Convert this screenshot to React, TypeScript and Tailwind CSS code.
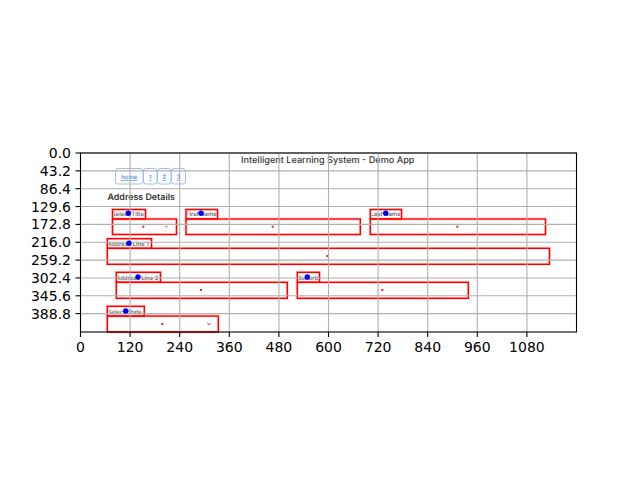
import React from 'react'

const xTicks = ['0', '120', '240', '360', '480', '600', '720', '840', '960', '1080']
const yTicks = ['0.0', '43.2', '86.4', '129.6', '172.8', '216.0', '259.2', '302.4', '345.6', '388.8']

// x1, y1, x2, y2 in screen pixels
const boxes = [
    [112.5, 209.5, 145.5, 219],
    [112.5, 219, 176.5, 234.5],
    [186, 209.5, 217.5, 219],
    [186, 219, 360.3, 234.5],
    [370.3, 209.5, 401.5, 219],
    [370.3, 219, 545.5, 234.5],
    [107.3, 238.7, 151.5, 248.3],
    [107.3, 248.3, 549.5, 264.3],
    [116.3, 272.3, 160.5, 282.3],
    [116.3, 282.3, 287.3, 298.3],
    [297.3, 272.3, 319.5, 282.3],
    [297.3, 282.3, 468.3, 298.3],
    [107.3, 306.3, 144.3, 316],
    [107.3, 316, 218.3, 332],
]

const labels = [
    { text: 'Select Title', x: 112, y: 216 },
    { text: 'First Name', x: 186, y: 216 },
    { text: 'Last Name', x: 370.5, y: 216 },
    { text: 'Address Line 1', x: 107.5, y: 245.5 },
    { text: 'Address Line 2', x: 116, y: 279.5 },
    { text: 'Suburb', x: 297.5, y: 279.5 },
    { text: 'Select State', x: 107.5, y: 313.5 },
]

const blueDots = [[128.3, 213.3], [201, 213.3], [385.7, 213.3], [129, 243.3], [138, 277], [307.3, 277], [125.7, 311]]
const redDots = [[143.3, 226.7], [272.7, 226.7], [457.3, 226.7], [327.3, 256], [201, 290], [382.3, 290], [162.3, 324]]

const navButtons = [
    { text: 'home', x: 115.5, w: 27.5 },
    { text: '1', x: 143.5, w: 13.5 },
    { text: '2', x: 157.5, w: 13.5 },
    { text: '3', x: 171.5, w: 14 },
]

function App() {
    return (
        <div className="h-[480px] w-[640px] bg-white">
            <svg width="640" height="480" viewBox="0 0 640 480">
                <g className="font-['Inter',sans-serif] [text-rendering:geometricPrecision]">
                    <text x="241" y="162.5" fontSize="9.15" fontWeight="500" fill="#3a3a3a">Intelligent Learning System - Demo App</text>
                    <text x="107.5" y="200" fontSize="8.9" fontWeight="600" fill="#333333">Address Details</text>
                    {navButtons.map((b) => (
                        <g key={b.text}>
                            <rect x={b.x} y="168.5" width={b.w} height="15.5" rx="2.5" fill="none" stroke="#9cc0f5" />
                            <text x={b.x + b.w / 2} y="179" fontSize="6" fontWeight="500" textAnchor="middle" fill="#4a86dc" textDecoration="underline">{b.text}</text>
                        </g>
                    ))}
                    {labels.map((l) => (
                        <text key={l.text} x={l.x} y={l.y} fontSize="5.9" fontWeight="600" fill="#707070">{l.text}</text>
                    ))}
                </g>

                {boxes.map((b, i) => (
                    <rect key={i} x={b[0]} y={b[1]} width={b[2] - b[0]} height={b[3] - b[1]} fill="none" stroke="#ffd6d6" strokeWidth="3" />
                ))}
                {boxes.map((b, i) => (
                    <rect key={i} x={b[0]} y={b[1]} width={b[2] - b[0]} height={b[3] - b[1]} fill="none" stroke="#ff0000" strokeWidth="1.4" />
                ))}
                {redDots.map((d, i) => (
                    <rect key={i} x={d[0] - 1} y={d[1] - 1} width="2" height="2" fill="#ff2020" />
                ))}
                <path d="M165 226 L166.4 227.4 L167.8 226" fill="none" stroke="#666666" strokeWidth="0.8" />
                <path d="M207.2 323 L209 324.8 L210.8 323" fill="none" stroke="#555555" strokeWidth="0.9" />

                {/* grid */}
                {xTicks.map((t, i) => (
                    <line key={t} x1={80.5 + 49.6 * i} y1="153" x2={80.5 + 49.6 * i} y2="332" stroke="#b0b0b0" strokeWidth="1.1" />
                ))}
                {yTicks.map((t, i) => (
                    <line key={t} x1="80.5" y1={153 + 17.85 * i} x2="576.5" y2={153 + 17.85 * i} stroke="#b0b0b0" strokeWidth="1.1" />
                ))}

                {blueDots.map((d, i) => (
                    <circle key={i} cx={d[0]} cy={d[1]} r="2.7" fill="#0000ff" />
                ))}

                {/* axes */}
                <rect x="80.5" y="153" width="496" height="179" fill="none" stroke="#000000" strokeWidth="1.1" />
                <g className="font-['DejaVu_Sans',sans-serif]" fontSize="14" fill="#000000">
                    {xTicks.map((t, i) => (
                        <g key={t}>
                            <line x1={80.5 + 49.6 * i} y1="332" x2={80.5 + 49.6 * i} y2="337" stroke="#000000" strokeWidth="1.1" />
                            <text x={80.5 + 49.6 * i} y="352" textAnchor="middle">{t}</text>
                        </g>
                    ))}
                    {yTicks.map((t, i) => (
                        <g key={t}>
                            <line x1="75.5" y1={153 + 17.85 * i} x2="80.5" y2={153 + 17.85 * i} stroke="#000000" strokeWidth="1.1" />
                            <text x="71" y={158 + 17.85 * i} textAnchor="end">{t}</text>
                        </g>
                    ))}
                </g>
            </svg>
        </div>
    )
}

export default App
